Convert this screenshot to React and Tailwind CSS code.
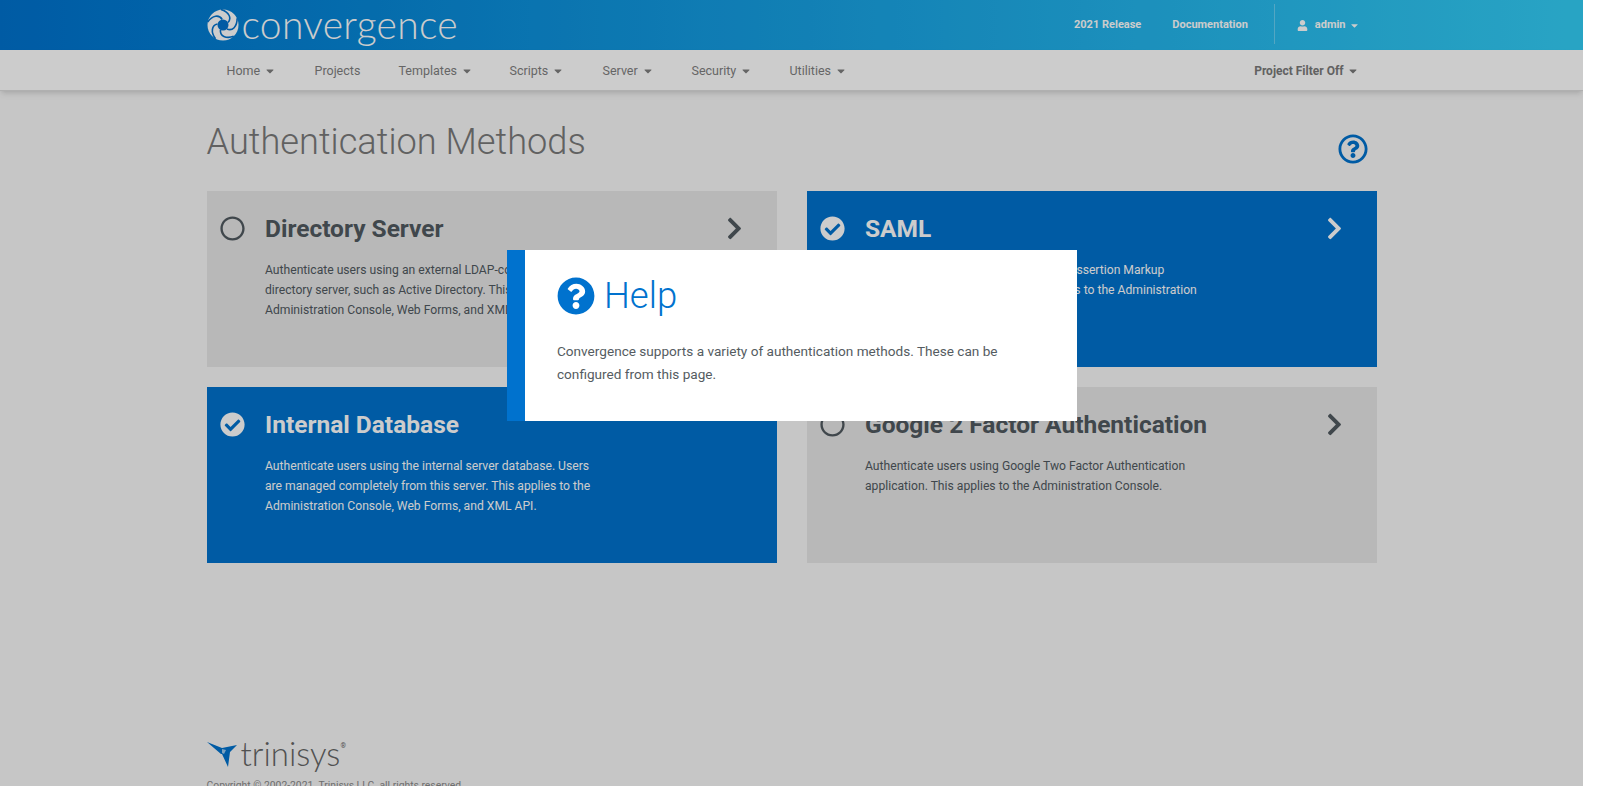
import React from 'react'
import { FaCaretDown, FaCheckCircle, FaChevronRight, FaQuestionCircle, FaRegCircle, FaRegQuestionCircle, FaUser } from 'react-icons/fa'

const navItems = [
  { label: 'Home', caret: true, w: 'w-[88px]' },
  { label: 'Projects', w: 'w-[84px]' },
  { label: 'Templates', caret: true, w: 'w-[111px]' },
  { label: 'Scripts', caret: true, w: 'w-[93px]' },
  { label: 'Server', caret: true, w: 'w-[89px]' },
  { label: 'Security', caret: true, w: 'w-[98px]' },
  { label: 'Utilities', caret: true, w: 'w-[90px]' },
]

const methods = [
  {
    title: 'Directory Server',
    arrow: true,
    text: 'Authenticate users using an external LDAP-compliant directory server, such as Active Directory. This applies to the Administration Console, Web Forms, and XML API.',
  },
  {
    title: 'SAML',
    active: true,
    arrow: true,
    text: 'Authenticate users using the Security Assertion Markup Language (SAML) protocol. This applies to the Administration Console.',
  },
  {
    title: 'Internal Database',
    active: true,
    text: 'Authenticate users using the internal server database. Users are managed completely from this server. This applies to the Administration Console, Web Forms, and XML API.',
  },
  {
    title: 'Google 2 Factor Authentication',
    arrow: true,
    text: 'Authenticate users using Google Two Factor Authentication application. This applies to the Administration Console.',
  },
]

function Swirl() {
  return (
    <svg viewBox="0 0 32 32" className="w-[32px] h-[32px] shrink-0">
      <circle cx="16" cy="16" r="15.500" fill="#fff" />
      {[0, 72, 144, 216, 288].map((deg) => (
        <path
          key={deg}
          d="M21 13.500C25 9 22 3 14 .5"
          transform={`rotate(${deg} 16 16)`}
          fill="none"
          stroke="#0072ce"
          strokeWidth="1.600"
        />
      ))}
      <circle cx="16" cy="16" r="5.500" fill="#0072ce" />
    </svg>
  )
}

function TrinisysMark() {
  return (
    <svg viewBox="0 0 31 27" className="w-[31px] h-[27px] shrink-0">
      <path d="M0 1 L15 7 L30 4 L23 11 L21 26 L15 13 L14 13 Z" fill="#0072ce" />
      <path d="M15 8 L19 9 L17 13 L15 12 Z" fill="#9ccbf0" />
    </svg>
  )
}

function MethodCard({ title, text, active, arrow }) {
  const Mark = active ? FaCheckCircle : FaRegCircle
  return (
    <div className={`h-[176px] pl-[13px] pr-[30px] pt-[25px] flex items-start ${active ? 'bg-[#0072ce] text-white' : 'bg-[#e6e6e6] text-[#50595f]'}`}>
      <Mark size={25} className="shrink-0" />
      <div className="ml-[20.500px] flex-1">
        <h3 className="text-[24.500px] leading-[26px] font-bold">{title}</h3>
        <p className="mt-[18px] text-[12.150px] leading-[20px] max-w-[334px]">{text}</p>
      </div>
      {arrow && <FaChevronRight size={25} className="shrink-0" />}
    </div>
  )
}

export default function App() {
  return (
    <div className="flex h-screen overflow-hidden bg-white font-['Roboto',sans-serif]">
      <div className="relative flex-1 min-w-0 overflow-hidden flex flex-col bg-[#f8f8f8]">
        <header className="h-[50px] shrink-0 bg-gradient-to-r from-[#0072ce] to-[#33cef6]">
          <div className="w-[1170px] mx-auto h-full flex items-center text-white">
            <Swirl />
            <span className="ml-[3px] text-[39px] leading-none font-light font-['Lato',sans-serif] tracking-[0.3px] -mt-[2px]">convergence</span>
            <div className="ml-auto flex items-center h-full text-[11px] font-bold">
              <a>2021 Release</a>
              <a className="ml-[31px]">Documentation</a>
              <span className="ml-[26px] mr-[22px] w-px h-[40px] -mt-[2px] bg-white/30" />
              <FaUser size={11} />
              <span className="ml-[7px]">admin</span>
              <FaCaretDown size={11} className="ml-[3px] mr-[17px]" />
            </div>
          </div>
        </header>

        <nav className="h-[41px] shrink-0 bg-white border-b border-[#ddd] shadow-md relative">
          <div className="w-[1170px] mx-auto h-full flex items-center pl-[20px] pt-[1px] text-[12.500px] text-[#7f7f7f]">
            {navItems.map((item) => (
              <a key={item.label} className={`flex items-center pt-[1px] ${item.w}`}>
                {item.label}
                {item.caret && <FaCaretDown size={12} className="ml-[4px]" />}
              </a>
            ))}
            <a className="ml-auto mr-[18px] flex items-center font-bold text-[12px] text-[#7a7a7a]">
              Project Filter Off
              <FaCaretDown size={12} className="ml-[3px]" />
            </a>
          </div>
        </nav>

        <main className="w-[1170px] mx-auto flex-1 flex flex-col">
          <div className="flex items-start justify-between pt-[26px]">
            <h1 className="text-[36.200px] leading-[50px] font-light text-[#7a7a7a]">Authentication Methods</h1>
            <FaRegQuestionCircle size={30} className="mt-[17px] mr-[9px] text-[#0072ce]" />
          </div>
          <div className="mt-[24px] grid grid-cols-2 gap-x-[30px] gap-y-[20px]">
            {methods.map((m) => (
              <MethodCard key={m.title} {...m} />
            ))}
          </div>
          <footer className="mt-auto shrink-0 -mb-[8px]">
            <div className="flex items-center text-[#666]">
              <TrinisysMark />
              <span className="ml-[3px] text-[33px] leading-[27px] font-light font-['Lato',sans-serif] -mt-[2px]">trinisys</span>
              <sup className="text-[7px] -mt-[10px]">®</sup>
            </div>
            <p className="mt-[10px] text-[10.350px] leading-[16px] text-[#8a8a8a]">Copyright © 2002-2021. Trinisys LLC. all rights reserved.</p>
          </footer>
        </main>

        <div className="absolute inset-0 bg-black/20" />

        <div className="absolute top-[250px] left-[507px] w-[570px] h-[171px] bg-white border-l-[18px] border-[#0072ce] pl-[32px] pt-[26px]">
          <div className="flex items-center">
            <FaQuestionCircle size={38} className="text-[#0072ce]" />
            <h2 className="ml-[9px] text-[36.500px] leading-[40px] font-light text-[#0072ce]">Help</h2>
          </div>
          <p className="mt-[24px] text-[13.600px] leading-[23px] text-[#555c61] max-w-[470px]">
            Convergence supports a variety of authentication methods. These can be configured from this page.
          </p>
        </div>
      </div>
      <div className="w-[17px] shrink-0 bg-white" />
    </div>
  )
}
